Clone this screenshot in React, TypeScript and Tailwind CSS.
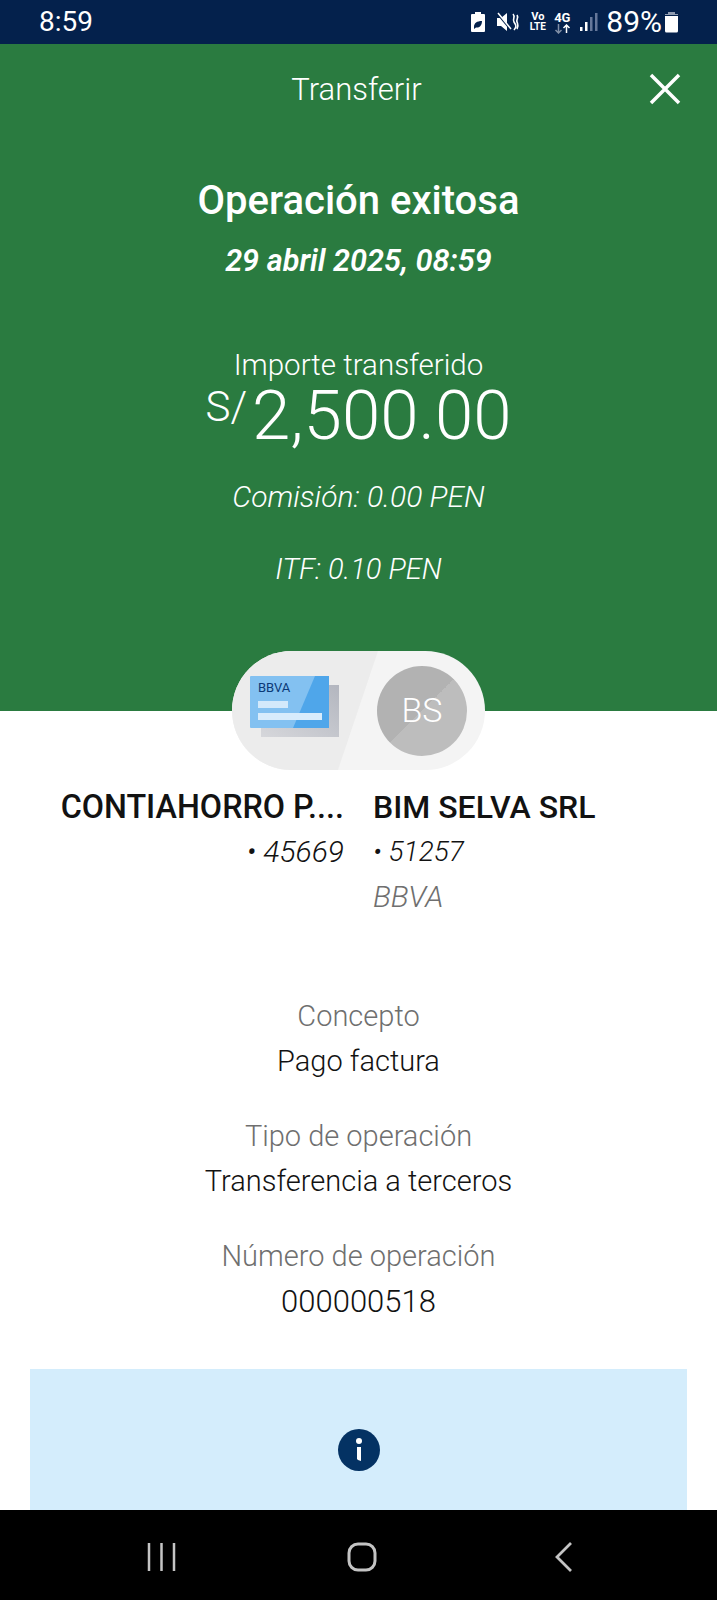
import React from "react";

function StatusIcons() {
  return (
    <div className="flex items-center text-white">
      <svg width="16" height="24" viewBox="0 0 16 24" className="mr-[10px]">
        <path d="M5 2h6v2h3a1 1 0 0 1 1 1v16a1 1 0 0 1-1 1H2a1 1 0 0 1-1-1V5a1 1 0 0 1 1-1h3z" fill="#fff" />
        <path d="M4 17c0-4 3-6 8-6 0 5-3 7-6 6.500L4 19z" fill="#04214c" />
      </svg>
      <svg width="24" height="22" viewBox="0 0 24 22" className="mr-[9px]">
        <path d="M1 7h4l6-5v18l-6-5H1z" fill="#fff" />
        <path d="M1 2l14 17" stroke="#04214c" strokeWidth="2" />
        <path d="M2 2l13 16" stroke="#fff" strokeWidth="1.500" />
        <path d="M17 3c3 3-1 5 1 8s3 5 0 8M21 4c2 3-1 4 0 7s2 4 0 7" stroke="#fff" strokeWidth="1.600" fill="none" />
      </svg>
      <div className="mr-[7px] flex w-[17px] flex-col items-center text-[11px] font-bold leading-[10px]">
        <span>Vo</span>
        <span className="text-[10px]">LTE</span>
      </div>
      <div className="mr-[9px] flex w-[18px] flex-col items-center">
        <span className="text-[13px] font-bold leading-[13px]">4G</span>
        <svg width="17" height="10" viewBox="0 0 16 10">
          <path d="M4 0v9M1 6l3 3 3-3" stroke="#7f8ea6" strokeWidth="1.500" fill="none" />
          <path d="M12 9V1M9 4l3-3 3 3" stroke="#fff" strokeWidth="1.500" fill="none" />
        </svg>
      </div>
      <svg width="18" height="20" viewBox="0 0 18 20" className="mr-[8px]">
        <rect x="0" y="15" width="2.500" height="4" fill="#fff" />
        <rect x="5" y="10" width="2.500" height="9" fill="#fff" />
        <rect x="10" y="5" width="2.500" height="14" fill="#66789a" />
        <rect x="15" y="1" width="2.500" height="18" fill="#66789a" />
      </svg>
      <span className="text-[30px] font-normal leading-none">89%</span>
      <svg width="15" height="24" viewBox="0 0 15 24" className="ml-[2px]">
        <path d="M4 2h7v2h3v1H1V4h3z" fill="#8f9bb0" />
        <path d="M1 6h13v15a1.500 1.500 0 0 1-1.500 1.500h-10A1.500 1.500 0 0 1 1 21z" fill="#fff" />
      </svg>
    </div>
  );
}

function CardArt() {
  return (
    <svg width="89" height="61" viewBox="0 0 89 61">
      <defs>
        <linearGradient id="cardShadow" x1="1" y1="0" x2="0" y2="1">
          <stop offset="0" stopColor="#b3b6bf" />
          <stop offset="1" stopColor="#d6d7db" />
        </linearGradient>
      </defs>
      <rect x="11" y="9" width="78" height="52" fill="url(#cardShadow)" />
      <rect x="0" y="0" width="79" height="52" rx="1" fill="#83c1f1" />
      <path d="M43 52L65 0h14v52z" fill="#4fa6ea" />
      <rect x="8" y="25" width="30" height="7" fill="#d3e9fb" />
      <rect x="8" y="37" width="64" height="7" fill="#d8ecfc" />
      <text x="8" y="16" fontSize="13" fontWeight="400" fill="#0b3a77" fontFamily="Roboto, sans-serif">BBVA</text>
    </svg>
  );
}

function Detail({ label, value, wide }: { label: string; value: string; wide?: boolean }) {
  return (
    <div className="flex flex-col items-center">
      <span className="text-[29px] leading-[45px] font-light text-[#6f6f6f]">{label}</span>
      {wide ? (
        <span className="text-[31px] leading-[45px] font-light text-[#121212]">{value}</span>
      ) : (
        <span className="text-[29px] leading-[45px] font-light text-[#121212]">{value}</span>
      )}
    </div>
  );
}

export default function App() {
  return (
    <div
      className="flex h-[1600px] w-[717px] flex-col overflow-hidden bg-white"
      style={{ fontFamily: 'Roboto, "Liberation Sans", sans-serif' }}
    >
      <div className="flex h-[44px] shrink-0 items-center justify-between bg-[#04214c] pl-[39px] pr-[38px] text-white">
        <span className="text-[28px] font-normal leading-none">8:59</span>
        <StatusIcons />
      </div>

      <div className="flex h-[667px] shrink-0 flex-col items-center bg-[#2a7b40] text-white">
        <div className="relative flex h-[90px] w-full items-center justify-center pr-[4px]">
          <span className="text-[31px] font-light leading-none">Transferir</span>
          <svg width="34" height="34" viewBox="0 0 34 34" className="absolute right-[35px] top-[28px]">
            <path d="M3 3l28 28M31 3L3 31" stroke="#fff" strokeWidth="3.500" />
          </svg>
        </div>
        <h1 className="mt-[42px] text-[40px] font-medium leading-[50px]">Operación exitosa</h1>
        <p className="mt-[15px] text-[30.700px] font-semibold italic leading-[40px]">29 abril 2025, 08:59</p>
        <p className="mt-[64px] text-[29.500px] font-light leading-[40px]">Importe transferido</p>
        <div className="mt-[2px] flex h-[58px] items-center font-light">
          <span className="mb-[18px] mr-[5px] text-[42px] leading-[40px]">S/</span>
          <span className="text-[69px] leading-[58px]">2,500.00</span>
        </div>
        <p className="mt-[32px] text-[30px] font-light italic leading-[40px]">Comisión: 0.00 PEN</p>
        <p className="mt-[32px] text-[29px] font-light italic leading-[40px]">ITF: 0.10 PEN</p>
      </div>

      <div className="relative z-10 mx-auto -mt-[60px] flex h-[119px] w-[253px] shrink-0 overflow-hidden rounded-full bg-[#f4f4f4]">
        <div className="flex w-[146px] items-start bg-[#ececec] pl-[18px] pt-[25px] [clip-path:polygon(0_0,100%_0,72.600%_100%,0_100%)]">
          <CardArt />
        </div>
        <div className="ml-[-1px] flex flex-1 items-center">
          <div className="flex h-[90px] w-[90px] items-center justify-center rounded-full bg-[linear-gradient(135deg,#b2b2b2_50%,#bdbdbd_50%)] text-[34px] font-light text-white">
            BS
          </div>
        </div>
      </div>

      <div className="mt-[17px] flex shrink-0">
        <div className="flex w-[344px] shrink-0 flex-col items-end text-[#121212]">
          <span className="text-[32.300px] font-medium leading-[40px]">CONTIAHORRO P....</span>
          <span className="mt-[5px] text-[30px] font-light italic leading-[40px]">• 45669</span>
        </div>
        <div className="ml-[29px] flex flex-col text-[#121212]">
          <span className="text-[32px] font-medium leading-[40px]">BIM SELVA SRL</span>
          <span className="mt-[5px] text-[28px] font-light italic leading-[40px]">• 51257</span>
          <span className="mt-[5px] text-[30px] font-light italic leading-[40px] text-[#6f6f6f]">BBVA</span>
        </div>
      </div>

      <div className="mt-[77px] flex shrink-0 flex-col gap-[30px]">
        <Detail label="Concepto" value="Pago factura" />
        <Detail label="Tipo de operación" value="Transferencia a terceros" />
        <Detail label="Número de operación" value="000000518" wide />
      </div>

      <div className="mx-[30px] mt-[45px] flex min-h-0 flex-1 justify-center bg-[#d4edfc] pt-[60px]">
        <svg width="42" height="42" viewBox="0 0 42 42">
          <circle cx="21" cy="21" r="21" fill="#043263" />
          <circle cx="21" cy="12" r="3" fill="#fff" />
          <path d="M19 18h4v14l-3 -1-1 -1z" fill="#fff" />
        </svg>
      </div>

      <div className="flex h-[90px] shrink-0 items-center bg-black pl-[147px] pt-[4px]">
        <svg width="29" height="30" viewBox="0 0 29 30">
          <path d="M2 1v28M14.500 1v28M27 1v28" stroke="#c4c4c4" strokeWidth="2.500" />
        </svg>
        <svg width="30" height="30" viewBox="0 0 30 30" className="ml-[171px]">
          <rect x="2" y="2" width="26" height="26" rx="9" stroke="#c4c4c4" strokeWidth="3" fill="none" />
        </svg>
        <svg width="18" height="30" viewBox="0 0 18 30" className="ml-[178px]">
          <path d="M16 1L2 15l14 14" stroke="#c4c4c4" strokeWidth="2.800" fill="none" />
        </svg>
      </div>
    </div>
  );
}
